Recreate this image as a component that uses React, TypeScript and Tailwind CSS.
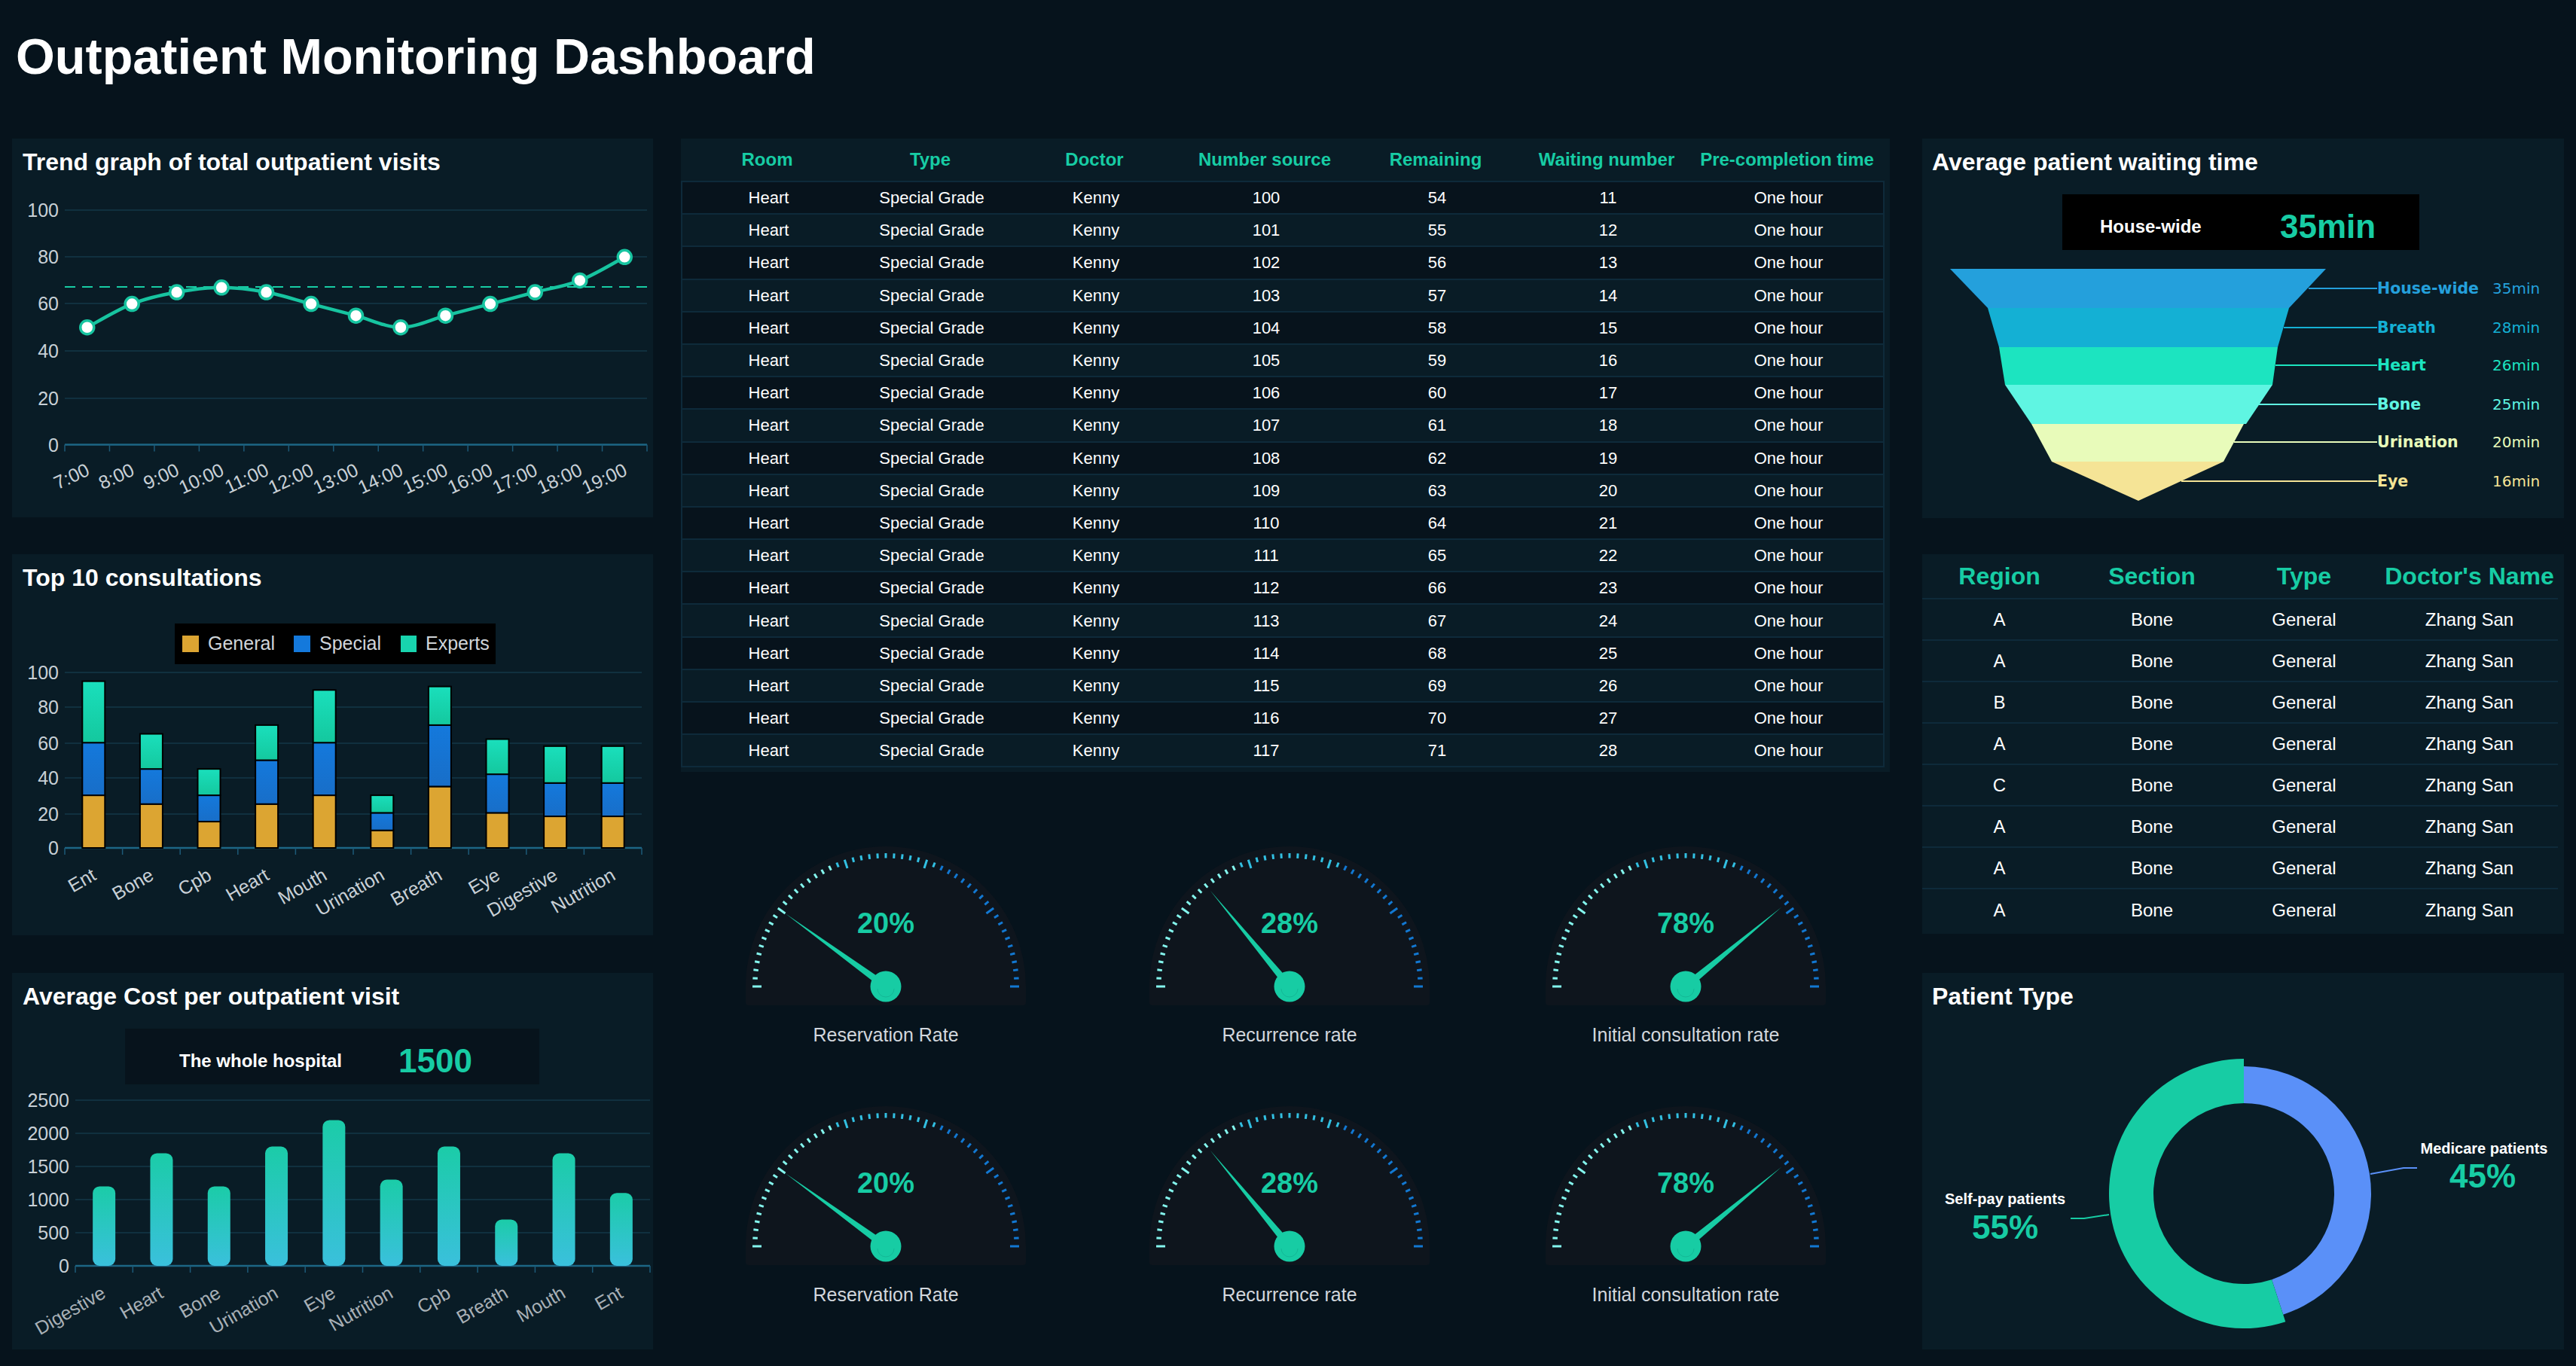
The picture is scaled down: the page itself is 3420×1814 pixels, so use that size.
import { ReactNode } from 'react'

const teal = '#17cca4'

const trendHours = ['7:00', '8:00', '9:00', '10:00', '11:00', '12:00', '13:00', '14:00', '15:00', '16:00', '17:00', '18:00', '19:00']
const trendValues = [50, 60, 65, 67, 65, 60, 55, 50, 55, 60, 65, 70, 80]

const consultations = [
  { name: 'Ent', a: 30, b: 30, c: 35 },
  { name: 'Bone', a: 25, b: 20, c: 20 },
  { name: 'Cpb', a: 15, b: 15, c: 15 },
  { name: 'Heart', a: 25, b: 25, c: 20 },
  { name: 'Mouth', a: 30, b: 30, c: 30 },
  { name: 'Urination', a: 10, b: 10, c: 10 },
  { name: 'Breath', a: 35, b: 35, c: 22 },
  { name: 'Eye', a: 20, b: 22, c: 20 },
  { name: 'Digestive', a: 18, b: 19, c: 21 },
  { name: 'Nutrition', a: 18, b: 19, c: 21 },
]

const costs = [
  { name: 'Digestive', v: 1200 },
  { name: 'Heart', v: 1700 },
  { name: 'Bone', v: 1200 },
  { name: 'Urination', v: 1800 },
  { name: 'Eye', v: 2200 },
  { name: 'Nutrition', v: 1300 },
  { name: 'Cpb', v: 1800 },
  { name: 'Breath', v: 700 },
  { name: 'Mouth', v: 1700 },
  { name: 'Ent', v: 1100 },
]

const funnel = [
  { name: 'House-wide', value: '35min', color: '#24a0dc', pts: '2589,357 3088,357 3039,409 2639,409', y: 383, x0: 3065 },
  { name: 'Breath', value: '28min', color: '#14b0d4', pts: '2639,409 3039,409 3024,461 2654,461', y: 435, x0: 3032 },
  { name: 'Heart', value: '26min', color: '#1ce4c0', pts: '2654,461 3024,461 3017,511 2662,511', y: 485, x0: 3021 },
  { name: 'Bone', value: '25min', color: '#5ff5e2', pts: '2662,511 3017,511 2982,563 2697,563', y: 537, x0: 2999 },
  { name: 'Urination', value: '20min', color: '#e8fbba', pts: '2697,563 2979,563 2952,613 2724,613', y: 587, x0: 2966 },
  { name: 'Eye', value: '16min', color: '#f5e496', pts: '2724,613 2952,613 2839,665', y: 639, x0: 2896 },
]

const regions = ['A', 'A', 'B', 'A', 'C', 'A', 'A', 'A']

const gauges = [
  { value: 20, label: 'Reservation Rate' },
  { value: 28, label: 'Recurrence rate' },
  { value: 78, label: 'Initial consultation rate' },
]

function smoothPath(pts: [number, number][]) {
  let d = `M${pts[0][0]} ${pts[0][1]}`
  for (let i = 0; i < pts.length - 1; i++) {
    const p0 = pts[Math.max(i - 1, 0)]
    const p1 = pts[i]
    const p2 = pts[i + 1]
    const p3 = pts[Math.min(i + 2, pts.length - 1)]
    const c1x = p1[0] + (p2[0] - p0[0]) / 6
    const c1y = p1[1] + (p2[1] - p0[1]) / 6
    const c2x = p2[0] - (p3[0] - p1[0]) / 6
    const c2y = p2[1] - (p3[1] - p1[1]) / 6
    d += ` C${c1x} ${c1y} ${c2x} ${c2y} ${p2[0]} ${p2[1]}`
  }
  return d
}

function Panel({ title, className, titleClass = 'pl-[14px]', children }: { title?: string; className: string; titleClass?: string; children: ReactNode }) {
  return (
    <div className={`bg-[#091c26] ${className}`}>
      {title && <h2 className={`h-[50px] pt-[11px] text-[32px] leading-[40px] font-bold text-white ${titleClass}`}>{title}</h2>}
      {children}
    </div>
  )
}

// grid lines + y labels + x axis line and ticks, all in page coordinates
function Axes({ x0, x1, ys, labels, count, color = '#c8d0d6' }: { x0: number; x1: number; ys: number[]; labels: string[]; count: number; color?: string }) {
  const step = (x1 - x0) / count
  const base = ys[ys.length - 1]
  return (
    <g>
      {ys.slice(0, -1).map((y) => (
        <line key={y} x1={x0} x2={x1} y1={y} y2={y} stroke="#10303f" strokeWidth="2" />
      ))}
      {labels.map((l, i) => (
        <text key={l} x={x0 - 8} y={ys[i] + 9} textAnchor="end" fontSize="25" fill={color}>{l}</text>
      ))}
      <line x1={x0} x2={x1} y1={base} y2={base} stroke="#1d6685" strokeWidth="2.5" />
      {Array.from({ length: count + 1 }, (_, i) => (
        <line key={i} x1={x0 + i * step} x2={x0 + i * step} y1={base} y2={base + 9} stroke="#1d5a78" strokeWidth="1.5" />
      ))}
    </g>
  )
}

function TrendChart() {
  const x0 = 86
  const x1 = 859
  const step = (x1 - x0) / 13
  const yOf = (v: number) => 590.5 - v * 3.115
  const pts = trendValues.map((v, i) => [x0 + step * (i + 0.5), yOf(v)] as [number, number])
  return (
    <svg className="block overflow-visible" width="851" height="453" viewBox="16 234 851 453">
      <Axes x0={x0} x1={x1} ys={[279, 341, 403, 466, 529, 590.5]} labels={['100', '80', '60', '40', '20', '0']} count={13} />
      <line x1={x0} x2={x1} y1={381} y2={381} stroke={teal} strokeWidth="2" strokeDasharray="14 9" />
      <path d={smoothPath(pts)} fill="none" stroke="#17c4a0" strokeWidth="4.5" />
      {pts.map(([x, y], i) => (
        <circle key={i} cx={x} cy={y} r="9" fill="#fff" stroke="#17c4a0" strokeWidth="3.5" />
      ))}
      {trendHours.map((h, i) => {
        const x = x0 + step * (i + 0.5) + 5
        return (
          <text key={h} x={x} y={630} textAnchor="end" fontSize="25" fill="#c8d0d6" transform={`rotate(-25 ${x} 630)`}>{h}</text>
        )
      })}
    </svg>
  )
}

function ConsultChart() {
  const x0 = 86
  const x1 = 852
  const step = (x1 - x0) / 10
  const base = 1126
  const unit = 2.33
  return (
    <svg className="block overflow-visible" width="851" height="360" viewBox="16 882 851 360">
      <defs>
        <linearGradient id="specialFill" x1="0" y1="0" x2="0" y2="1">
          <stop offset="0" stopColor="#1479dc" />
          <stop offset="1" stopColor="#186ec8" />
        </linearGradient>
        <linearGradient id="expertFill" x1="0" y1="0" x2="0" y2="1">
          <stop offset="0" stopColor="#1adfbc" />
          <stop offset="1" stopColor="#14c89e" />
        </linearGradient>
      </defs>
      <Axes x0={x0} x1={x1} ys={[893, 939, 987, 1033, 1081, 1126]} labels={['100', '80', '60', '40', '20', '0']} count={10} />
      {consultations.map((c, i) => {
        const x = x0 + step * (i + 0.5) - 15
        const ha = c.a * unit
        const hb = c.b * unit
        const hc = c.c * unit
        return (
          <g key={c.name} stroke="#000" strokeWidth="2">
            <rect x={x} y={base - ha} width="30" height={ha} fill="#dca532" />
            <rect x={x} y={base - ha - hb} width="30" height={hb} fill="url(#specialFill)" />
            <rect x={x} y={base - ha - hb - hc} width="30" height={hc} fill="url(#expertFill)" />
          </g>
        )
      })}
      {consultations.map((c, i) => {
        const x = x0 + step * (i + 0.5) + 5
        return (
          <text key={c.name} x={x} y={1167} textAnchor="end" fontSize="25" fill="#c8d0d6" transform={`rotate(-30 ${x} 1167)`}>{c.name}</text>
        )
      })}
    </svg>
  )
}

function CostChart() {
  const x0 = 100
  const x1 = 863
  const step = (x1 - x0) / 10
  const base = 1681
  const unit = 0.088
  return (
    <svg className="block overflow-visible" width="851" height="352" viewBox="16 1440 851 352">
      <defs>
        <linearGradient id="costFill" x1="0" y1="0" x2="0" y2="1">
          <stop offset="0" stopColor="#1bcca8" />
          <stop offset="1" stopColor="#3ac0dc" />
        </linearGradient>
      </defs>
      <Axes x0={x0} x1={x1} ys={[1461, 1505, 1549, 1593, 1637, 1681]} labels={['2500', '2000', '1500', '1000', '500', '0']} count={10} />
      {costs.map((c, i) => {
        const h = c.v * unit
        return <rect key={c.name} x={x0 + step * (i + 0.5) - 15} y={base - h} width="30" height={h} rx="9" fill="url(#costFill)" />
      })}
      {costs.map((c, i) => {
        const x = x0 + step * (i + 0.5) + 4
        return (
          <text key={c.name} x={x} y={1722} textAnchor="end" fontSize="25" fill="#a8b0b6" transform={`rotate(-30 ${x} 1722)`}>{c.name}</text>
        )
      })}
    </svg>
  )
}

function StatBox({ label, value, className, labelClass }: { label: string; value: string; className: string; labelClass: string }) {
  return (
    <div className={`flex h-[74px] items-center pt-[12px] ${className}`}>
      <span className={`text-[24px] font-bold text-white ${labelClass}`}>{label}</span>
      <span className="text-[44px] font-bold text-[#17cca4]">{value}</span>
    </div>
  )
}

function Legend() {
  const items = [
    { name: 'General', sw: 'w-[22px] bg-[#dca532]', cls: 'w-[148px]' },
    { name: 'Special', sw: 'w-[22px] bg-[#1479dc]', cls: 'w-[142px]' },
    { name: 'Experts', sw: 'w-[21px] bg-[#18d4ae]', cls: 'w-[112px]' },
  ]
  return (
    <div className="ml-[216px] mt-[42px] flex h-[54px] w-[426px] items-center bg-black pl-[10px]">
      {items.map((it) => (
        <div key={it.name} className={`flex shrink-0 items-center gap-[12px] ${it.cls}`}>
          <span className={`h-[22px] shrink-0 ${it.sw}`} />
          <span className="text-[25px] text-[#d0d5da]">{it.name}</span>
        </div>
      ))}
    </div>
  )
}

function Gauge({ value, label, className }: { value: number; label: string; className?: string }) {
  const R = 177
  const cx = 186
  const cy = 186
  const angle = Math.PI - (value / 100) * Math.PI
  const nx = Math.cos(angle)
  const ny = -Math.sin(angle)
  const tipLen = 165
  const tip = `${cx + nx * tipLen},${cy + ny * tipLen}`
  const base = `${cx - ny * 5},${cy + nx * 5} ${cx + ny * 5},${cy - nx * 5}`
  const ticks = Array.from({ length: 51 }, (_, i) => {
    const a = Math.PI - (i / 50) * Math.PI
    const major = i % 10 === 0
    const r0 = major ? R - 12 : R - 6.5
    const color = i <= 18 ? '#84f6ee' : i <= 31 ? '#32c0e2' : '#1278d2'
    return (
      <line
        key={i}
        x1={cx + Math.cos(a) * r0}
        y1={cy - Math.sin(a) * r0}
        x2={cx + Math.cos(a) * R}
        y2={cy - Math.sin(a) * R}
        stroke={color}
        strokeWidth="3"
      />
    )
  })
  return (
    <div className={`w-[372px] shrink-0 ${className ?? ''}`}>
      <svg className="block" width="372" height="211" viewBox="0 0 372 211">
        <path d="M0 186 A186 186 0 0 1 372 186 L372 207 Q372 211 368 211 L4 211 Q0 211 0 207 Z" fill="#0e151d" />
        {ticks}
        <polygon points={`${base} ${tip}`} fill={teal} />
        <circle cx={cx} cy={cy} r="20.5" fill={teal} />
        <path d={`M${cx - 11} ${cy + 3} A11 11 0 0 0 ${cx + 11} ${cy + 3}`} fill="none" stroke="#14b896" strokeWidth="1" />
        <text x={cx} y="115" textAnchor="middle" fontSize="38" fontWeight="bold" fill={teal}>{value}%</text>
      </svg>
      <p className="mt-[24px] whitespace-nowrap text-center text-[25px] leading-[30px] text-[#d2d7dd]">{label}</p>
    </div>
  )
}

function FunnelChart() {
  return (
    <svg className="block overflow-visible" width="852" height="356" viewBox="2552 332 852 356">
      {funnel.map((f) => (
        <g key={f.name}>
          <polygon points={f.pts} fill={f.color} />
          <line x1={f.x0} x2={3156} y1={f.y} y2={f.y} stroke={f.color} strokeWidth="2" />
          <text x={3156} y={f.y + 7} fontSize="20.5" fontWeight="bold" fill={f.color} className="font-['DejaVu_Sans',sans-serif]">{f.name}</text>
          <text x={3309} y={f.y + 7} fontSize="20" fill={f.color} className="font-['DejaVu_Sans',sans-serif]">{f.value}</text>
        </g>
      ))}
    </svg>
  )
}

function DonutChart() {
  const cx = 2979
  const cy = 1585
  const pt = (r: number, deg: number) => {
    const a = (deg * Math.PI) / 180
    return `${cx + r * Math.sin(a)} ${cy - r * Math.cos(a)}`
  }
  const r0 = 120
  return (
    <svg className="block overflow-visible" width="852" height="450" viewBox="2552 1342 852 450">
      <path d={`M${pt(169, 0)} A169 169 0 0 1 ${pt(169, 162)} L${pt(r0, 162)} A${r0} ${r0} 0 0 0 ${pt(r0, 0)} Z`} fill="#5a90f8" />
      <path d={`M${pt(179, 162)} A179 179 0 1 1 ${pt(179, 360)} L${pt(r0, 360)} A${r0} ${r0} 0 1 0 ${pt(r0, 162)} Z`} fill={teal} />
      <polyline points="3147,1559 3191,1551 3209,1551" fill="none" stroke="#5a90f8" strokeWidth="2" />
      <polyline points="2800,1613 2767,1618 2749,1618" fill="none" stroke={teal} strokeWidth="2" />
      <text x={3298} y={1532} textAnchor="middle" fontSize="20" fontWeight="bold" fill="#fff">Medicare patients</text>
      <text x={3296} y={1577} textAnchor="middle" fontSize="44" fontWeight="bold" fill={teal}>45%</text>
      <text x={2662} y={1599} textAnchor="middle" fontSize="20" fontWeight="bold" fill="#fff">Self-pay patients</text>
      <text x={2662} y={1645} textAnchor="middle" fontSize="44" fontWeight="bold" fill={teal}>55%</text>
    </svg>
  )
}

function VisitTable() {
  const cols = 'grid grid-cols-[229px_204px_232px_220px_234px_220px_259px] text-center'
  const rows = Array.from({ length: 18 }, (_, i) => i)
  return (
    <div className="h-[841px] bg-[#091c26]">
      <div className={`${cols} h-[56px] items-center text-[24px] font-bold text-[#17cca4]`}>
        <span>Room</span>
        <span>Type</span>
        <span>Doctor</span>
        <span>Number source</span>
        <span>Remaining</span>
        <span>Waiting number</span>
        <span>Pre-completion time</span>
      </div>
      <div className="w-[1598px] border-x-2 border-t-2 border-[#0e2a3a]">
        {rows.map((i) => (
          <div
            key={i}
            className={`${cols} h-[43.2px] items-center border-b-2 border-[#0e2a3a] text-[22px] text-white ${i % 2 === 0 ? 'bg-[#07131c]' : 'bg-[#091c26]'}`}
          >
            <span>Heart</span>
            <span>Special Grade</span>
            <span>Kenny</span>
            <span>{100 + i}</span>
            <span>{54 + i}</span>
            <span>{11 + i}</span>
            <span>One hour</span>
          </div>
        ))}
      </div>
    </div>
  )
}

function DoctorTable() {
  const cols = 'grid grid-cols-[205px_200px_204px_235px] text-center'
  return (
    <Panel className="h-[504px]">
      <div className={`${cols} h-[60px] w-[844px] items-center border-b-2 border-[#0e2a3a] text-[32px] font-bold text-[#17cca4]`}>
        <span>Region</span>
        <span>Section</span>
        <span>Type</span>
        <span>Doctor's Name</span>
      </div>
      {regions.map((r, i) => (
        <div key={i} className={`${cols} h-[55px] w-[844px] items-center text-[24px] text-white ${i < regions.length - 1 ? 'border-b-2 border-[#0e2a3a]' : ''}`}>
          <span>{r}</span>
          <span>Bone</span>
          <span>General</span>
          <span>Zhang San</span>
        </div>
      ))}
    </Panel>
  )
}

export default function App() {
  return (
    <div className="h-[1814px] w-[3420px] overflow-hidden bg-[#06131c] font-['Liberation_Sans',Arial,sans-serif]">
      <h1 className="h-[184px] pl-[21px] pt-[36px] text-[66.6px] leading-[78px] font-bold text-white">Outpatient Monitoring Dashboard</h1>
      <div className="flex">
        <div className="ml-[16px] flex w-[851px] flex-col">
          <Panel title="Trend graph of total outpatient visits" className="h-[503px]">
            <TrendChart />
          </Panel>
          <Panel title="Top 10 consultations" className="mt-[49px] h-[506px]">
            <Legend />
            <ConsultChart />
          </Panel>
          <Panel title="Average Cost per outpatient visit" className="mt-[50px] h-[500px]">
            <StatBox
              label="The whole hospital"
              value="1500"
              className="ml-[150px] mt-[24px] w-[550px] bg-[#07131c] pl-[72px]"
              labelClass="w-[291px]"
            />
            <CostChart />
          </Panel>
        </div>

        <div className="ml-[37px] w-[1605px]">
          <VisitTable />
          <div className="ml-[86px] mt-[99px] grid grid-cols-[372px_372px_372px] grid-rows-[345px_345px] gap-x-[160px]">
            {[0, 1].flatMap((row) =>
              gauges.map((g, i) => (
                <Gauge
                  key={`${row}-${i}`}
                  value={g.value}
                  label={g.label}
                  className={i === 1 ? 'ml-[4px]' : i === 2 ? 'ml-[-2px]' : ''}
                />
              )),
            )}
          </div>
        </div>

        <div className="ml-[43px] flex w-[852px] flex-col">
          <Panel title="Average patient waiting time" className="h-[504px]" titleClass="pl-[13px]">
            <StatBox
              label="House-wide"
              value="35min"
              className="ml-[186px] mt-[24px] w-[474px] bg-black pl-[50px]"
              labelClass="w-[239px]"
            />
            <FunnelChart />
          </Panel>
          <div className="mt-[48px]">
            <DoctorTable />
          </div>
          <Panel title="Patient Type" className="mt-[52px] h-[500px]" titleClass="pl-[13px]">
            <DonutChart />
          </Panel>
        </div>
      </div>
    </div>
  )
}
